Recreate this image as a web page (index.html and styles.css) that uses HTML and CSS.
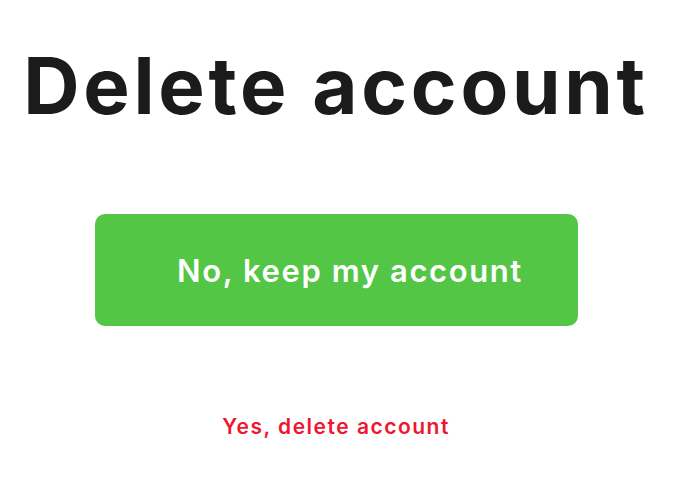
FILE: index.html
```html
<!DOCTYPE html>
<html>
<head>
<meta charset="utf-8">
<link rel="stylesheet" href="styles.css">
</head>
<body>
<main class="page">
  <h1 class="title">Delete account</h1>
  <button class="keep">No, keep my account</button>
  <a class="delete" href="#">Yes, delete account</a>
</main>
</body>
</html>
```
FILE: styles.css
```css
html, body {
  margin: 0;
  padding: 0;
  background: #ffffff;
}
.page {
  display: flex;
  flex-direction: column;
  align-items: center;
  padding-right: 4px;
  font-family: Inter, "Liberation Sans", sans-serif;
}
.title {
  margin: 39px 0 0 0;
  font-size: 78px;
  line-height: 94px;
  font-weight: 700;
  color: #1b1b1b;
  letter-spacing: 3.7px;
}
.keep {
  margin-top: 81px;
  width: 483px;
  height: 112px;
  border: none;
  border-radius: 10px;
  background: #53c645;
  color: #ffffff;
  font-family: Inter, "Liberation Sans", sans-serif;
  font-size: 31px;
  font-weight: 600;
  letter-spacing: 1.6px;
  padding: 0 0 0 28px;
}
.delete {
  margin-top: 88px;
  font-size: 21px;
  font-weight: 600;
  letter-spacing: 1.5px;
  color: #f0162f;
  text-decoration: none;
}
```
